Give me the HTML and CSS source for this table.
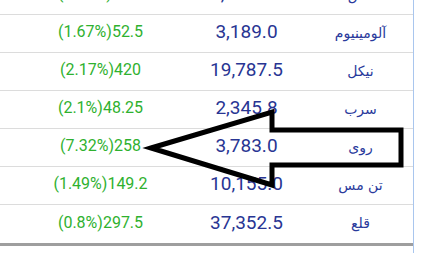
FILE: index.html
```html
<!DOCTYPE html>
<html lang="fa">
<head>
<meta charset="utf-8">
<title>Metals</title>
<link rel="stylesheet" href="styles.css">
</head>
<body>
<div class="page">
  <div class="table">
    <div class="row"><div class="chg">(0.62%)57.5</div><div class="price">9,322.02</div><div class="name">مس</div></div>
    <div class="row"><div class="chg">(1.67%)52.5</div><div class="price">3,189.0</div><div class="name">آلومینیوم</div></div>
    <div class="row"><div class="chg">(2.17%)420</div><div class="price">19,787.5</div><div class="name">نیکل</div></div>
    <div class="row"><div class="chg">(2.1%)48.25</div><div class="price">2,345.8</div><div class="name">سرب</div></div>
    <div class="row"><div class="chg">(7.32%)258</div><div class="price">3,783.0</div><div class="name">روی</div></div>
    <div class="row"><div class="chg">(1.49%)149.2</div><div class="price">10,155.0</div><div class="name">تن مس</div></div>
    <div class="row last"><div class="chg">(0.8%)297.5</div><div class="price">37,352.5</div><div class="name">قلع</div></div>
  </div>
  <svg class="arrow" width="424" height="253" viewBox="0 0 424 253">
    <polygon points="151,148 272,112 272,130 401,130 401,165 272,165 272,185" fill="none" stroke="#000" stroke-width="5" stroke-linejoin="miter" stroke-miterlimit="10"/>
  </svg>
</div>
</body>
</html>
```
FILE: styles.css
```css
html, body {
  margin: 0;
  padding: 0;
  background: #fff;
}
.page {
  position: relative;
  width: 424px;
  height: 253px;
  overflow: hidden;
}
.table {
  width: 413px;
  height: 280px;
  margin-top: -23px;
  border-right: 1px solid #a9c6ee;
}
.row {
  display: grid;
  grid-template-columns: 201px 91px 121px;
  height: 37px;
  align-items: center;
  border-bottom: 1px solid #dcdcdc;
}
.row.last {
  border-bottom: 3px solid #9e9e9e;
  height: 38px;
}
.chg {
  font-family: Roboto, "Liberation Sans", sans-serif;
  font-size: 16px;
  color: #2fb12f;
  text-align: center;
  padding-bottom: 4px;
}
.price {
  font-family: Roboto, "Liberation Sans", sans-serif;
  font-size: 19px;
  color: #283593;
  text-align: center;
  padding-bottom: 4px;
}
.name {
  font-family: "DejaVu Sans", sans-serif;
  font-size: 14px;
  color: #2a3a9c;
  text-align: center;
  padding-left: 16px;
  direction: rtl;
  padding-bottom: 2px;
}
.arrow {
  position: absolute;
  left: 0;
  top: 0;
}
```
